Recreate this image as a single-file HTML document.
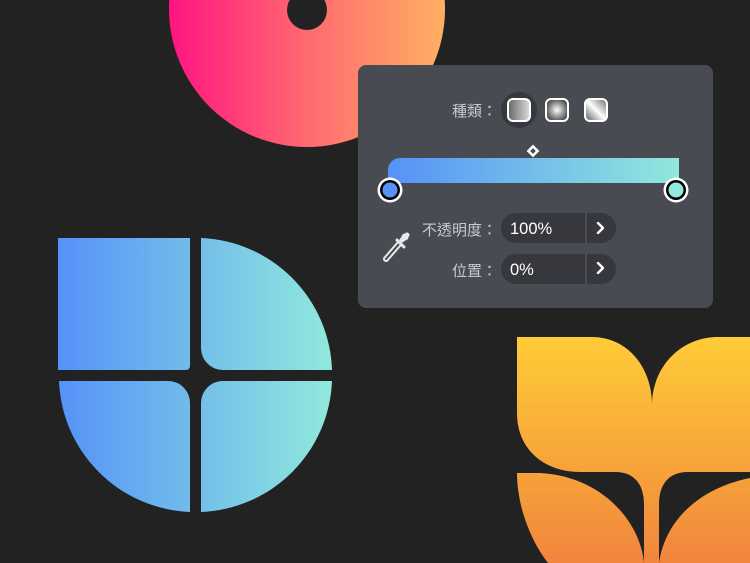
<!DOCTYPE html>
<html><head><meta charset="utf-8"><style>
html,body{margin:0;padding:0;background:#222222;width:750px;height:563px;overflow:hidden;position:relative;font-family:"Liberation Sans","Noto Sans CJK TC",sans-serif}
.abs{position:absolute}
.lbl{position:absolute;color:#c9cacd;font-size:15px;text-align:right;white-space:nowrap}
.pill{position:absolute;left:501px;width:115px;height:30px;border-radius:15px;background:#36383d}
.pill .v{position:absolute;left:9px;top:7px;color:#fff;font-size:16.5px}
.pill .d{position:absolute;left:84px;top:0;width:2px;height:30px;background:#4a4c52}
</style></head><body>
<svg class="abs" style="left:0;top:0" width="750" height="563" viewBox="0 0 750 563">
<defs>
<linearGradient id="pk" x1="170" y1="0" x2="445" y2="0" gradientUnits="userSpaceOnUse"><stop offset="0" stop-color="#ff1581"/><stop offset="0.5" stop-color="#ff6a70"/><stop offset="1" stop-color="#ffb062"/></linearGradient>
<linearGradient id="bl" x1="58" y1="0" x2="332" y2="0" gradientUnits="userSpaceOnUse"><stop offset="0" stop-color="#5592f8"/><stop offset="1" stop-color="#90e9dc"/></linearGradient>
<linearGradient id="or" x1="0" y1="337" x2="0" y2="563" gradientUnits="userSpaceOnUse"><stop offset="0" stop-color="#ffcc38"/><stop offset="1" stop-color="#f1853c"/></linearGradient>
<linearGradient id="bar" x1="388" y1="0" x2="679" y2="0" gradientUnits="userSpaceOnUse"><stop offset="0" stop-color="#5592f8"/><stop offset="1" stop-color="#90e9dc"/></linearGradient>
<linearGradient id="g1" x1="0" y1="0" x2="1" y2="0"><stop offset="0" stop-color="#666"/><stop offset="1" stop-color="#ddd"/></linearGradient>
<radialGradient id="g2"><stop offset="0" stop-color="#fff"/><stop offset="1" stop-color="#555"/></radialGradient>
<linearGradient id="g3" x1="0" y1="1" x2="1" y2="0"><stop offset="0" stop-color="#555"/><stop offset="0.5" stop-color="#fff"/><stop offset="1" stop-color="#666"/></linearGradient>
</defs>
<circle cx="307" cy="9" r="138" fill="url(#pk)"/>
<circle cx="307" cy="10" r="20" fill="#222"/>
<path d="M58,238 L190,238 L190,366 A4,4 0 0 1 186,370 L58,370 Z" fill="url(#bl)"/>
<path d="M201,238 A136.5,136.5 0 0 1 332,370 L223,370 A22,22 0 0 1 201,348 Z" fill="url(#bl)"/>
<path d="M223,381 L332,381 A136.5,136.5 0 0 1 201,512 L201,403 A22,22 0 0 1 223,381 Z" fill="url(#bl)"/>
<path d="M59,381 L168,381 A22,22 0 0 1 190,403 L190,512 A136.5,136.5 0 0 1 59,381 Z" fill="url(#bl)"/>
<path d="M517,337 L592,337 C628,337 652,368 652,405 C652,368 680,337 718,337 L750,337 L750,472 L688,472 C668,472 659,485 659,505 L659,563 L644,563 L644,505 C644,485 635,472 615,472 L580,472 C545,472 517,450 517,413 Z" fill="url(#or)"/>
<path d="M517,473 L540,473 C600,476 640,520 644,563 L548,563 C530,540 517,505 517,473 Z" fill="url(#or)"/>
<path d="M659,563 C665,520 700,488 750,478 L750,563 Z" fill="url(#or)"/>
<rect x="358" y="65" width="355" height="243" rx="8" fill="#484b52"/>
<circle cx="519" cy="110" r="18" fill="#36383d"/>
<rect x="508" y="99" width="22" height="22" rx="5" fill="url(#g1)" stroke="#fff" stroke-width="2"/>
<rect x="546" y="99" width="22" height="22" rx="5" fill="url(#g2)" stroke="#fff" stroke-width="2"/>
<rect x="585" y="99" width="22" height="22" rx="5" fill="url(#g3)" stroke="#fff" stroke-width="2"/>
<rect x="528.5" y="146.5" width="9" height="9" transform="rotate(45 533 151)" fill="#fff"/>
<rect x="531" y="149" width="4" height="4" transform="rotate(45 533 151)" fill="#484b52"/>
<path d="M400,158 L679,158 L679,183 L388,183 L388,170 A12,12 0 0 1 400,158 Z" fill="url(#bar)"/>
<circle cx="390" cy="190" r="12.5" fill="#fff"/><circle cx="390" cy="190" r="10" fill="#000"/><circle cx="390" cy="190" r="7.5" fill="#5592f8"/>
<circle cx="676" cy="190" r="12.5" fill="#fff"/><circle cx="676" cy="190" r="10" fill="#000"/><circle cx="676" cy="190" r="7.5" fill="#90e9dc"/>
<path d="M386,259 L399,244" stroke="#e8e8ea" stroke-width="6" stroke-linecap="round"/>
<path d="M386,259 L399,244" stroke="#484b52" stroke-width="2" stroke-linecap="round"/>
<path d="M397,240 L404,247" stroke="#e8e8ea" stroke-width="3" stroke-linecap="round"/>
<circle cx="405" cy="237" r="3.5" fill="#e8e8ea"/>
<path d="M402,240 L407,235" stroke="#e8e8ea" stroke-width="5" stroke-linecap="round"/>
</svg>
<div class="lbl" style="right:253px;top:100px">種類：</div>
<div class="lbl" style="right:253px;top:219px">不透明度：</div>
<div class="lbl" style="right:253px;top:260px">位置：</div>
<div class="pill" style="top:213px"><div class="v">100%</div><div class="d"></div>
<svg class="abs" style="left:95px;top:9px" width="10" height="12"><path d="M2,1 L7,6 L2,11" stroke="#fff" stroke-width="2.4" fill="none" stroke-linecap="round" stroke-linejoin="round"/></svg></div>
<div class="pill" style="top:254px"><div class="v">0%</div><div class="d"></div>
<svg class="abs" style="left:95px;top:8px" width="10" height="12"><path d="M2,1 L7,6 L2,11" stroke="#fff" stroke-width="2.4" fill="none" stroke-linecap="round" stroke-linejoin="round"/></svg></div>
</body></html>
